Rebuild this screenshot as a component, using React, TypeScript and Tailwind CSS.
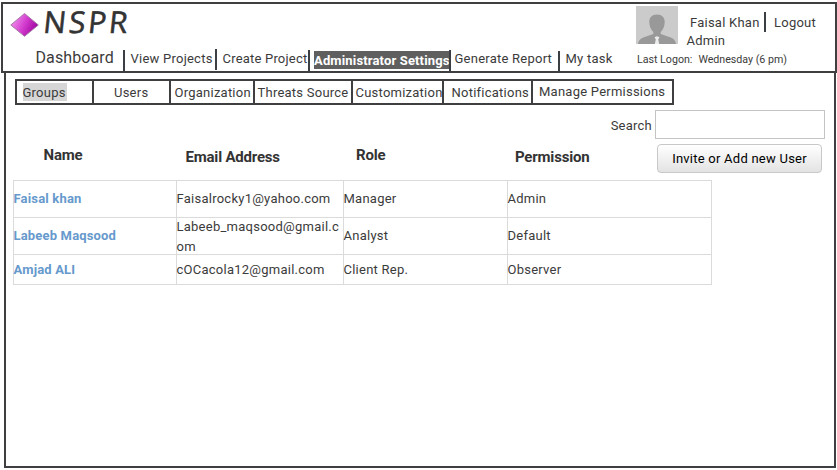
import React from 'react';

const tabs = [
  { label: 'Groups', cell: 'w-[77px] border-r-2 pl-[6px]', text: 'bg-[#d6d6d6] pr-px -indent-[0.5px]' },
  { label: 'Users', cell: 'w-[77px] border-r-2 pl-[20px]', text: '' },
  { label: 'Organization', cell: 'w-[84px] border-r-2 pl-[3.5px]', text: '' },
  { label: 'Threats Source', cell: 'w-[98px] border-r-2 pl-[2.5px]', text: '' },
  { label: 'Customization', cell: 'w-[91px] border-r-2 pl-[2.5px]', text: '' },
  { label: 'Notifications', cell: 'w-[89px] border-r-2 pl-[7.5px]', text: '' },
  { label: 'Manage Permissions', cell: 'w-[139px] pl-[6px]', text: '-mt-px' },
];

const rows = [
  { name: 'Faisal khan', email: ['Faisalrocky1@yahoo.com'], role: 'Manager', permission: 'Admin', height: 'h-[37px]', pad: 'pb-[2px]', emailPad: 'pb-[2px] leading-[19px]' },
  { name: 'Labeeb Maqsood', email: ['Labeeb_maqsood@gmail.c', 'om'], role: 'Analyst', permission: 'Default', height: 'h-[37px]', pad: 'pb-[2px]', emailPad: 'pt-[2px] leading-[20px]' },
  { name: 'Amjad ALI', email: ['cOCacola12@gmail.com'], role: 'Client Rep.', permission: 'Observer', height: 'h-[30px]', pad: '', emailPad: 'leading-[19px]' },
];

function Bar({ className = 'h-[21px]' }: { className?: string }) {
  return <div className={`w-[2px] shrink-0 bg-[#3b3f44] ${className}`} />;
}

function Logo() {
  return (
    <div className="flex h-[32px] pl-[7px] pt-[7px]">
      <svg width="30" height="26" viewBox="0 0 30 26" className="mt-[1px] shrink-0">
        <defs>
          <linearGradient id="gem" x1="0" y1="0.3" x2="1" y2="0.7">
            <stop offset="0.1" stopColor="#ec82e8" />
            <stop offset="0.5" stopColor="#d23bcd" />
            <stop offset="0.9" stopColor="#a30aa4" />
          </linearGradient>
        </defs>
        <path d="M14.5 1.5 28.3 13 14.5 24.3.8 13Z" fill="url(#gem)" stroke="#a57aa5" strokeWidth="1" />
      </svg>
      <span className="ml-[2px] mt-[-5px] h-[32px] origin-bottom-left -skew-x-6 font-['Open_Sans'] text-[30px] leading-[32px] tracking-[2.8px] text-[#333] [-webkit-text-stroke:0.6px_#333]">
        NSPR
      </span>
    </div>
  );
}

function Avatar() {
  return (
    <svg width="42" height="38" viewBox="0 0 42 38" className="shrink-0">
      <rect width="42" height="38" fill="#cbcbcb" />
      <path d="M21 8.500c5 0 8 3 7.700 8-.2 4-1.500 7-4 9.500v2l10 3.500c3 1 5 3.500 5.300 6.500H2c.3-3 2.300-5.500 5.300-6.500l10-3.500v-2c-2.500-2.500-3.800-5.500-4-9.500-.3-5 2.700-8 7.700-8Z" fill="#999" />
      <path d="m18.500 31.200 2.500-1 2.500 1-1.300 2.300 1 4.500h-4.400l1-4.500Z" fill="#ececec" />
    </svg>
  );
}

function Header() {
  return (
    <header className="flex h-[71px] w-[836px] justify-between border-2 border-[#3f3f41]">
      <div className="w-[626px]">
        <Logo />
        <nav className="flex h-[35px] pt-[14px]">
          <span className="-mt-px w-[120px] shrink-0 pl-[32.5px] text-[16px] leading-[18px] tracking-[0.1px]">Dashboard</span>
          <div className="flex w-[92px] shrink-0">
            <Bar />
            <span className="ml-[5.5px] mt-[1px] leading-4">View Projects</span>
          </div>
          <div className="flex w-[93px] shrink-0">
            <Bar className="-mt-px h-[21px]" />
            <span className="ml-[5.5px] mt-[1px] leading-4 tracking-[0.2px]">Create Project</span>
          </div>
          <div className="flex w-[141px] shrink-0">
            <Bar />
            <span className="ml-[4px] mt-[1px] h-[18px] w-[135px] bg-[#5f5f5f] font-bold leading-[19px] tracking-[0.15px] text-white">Administrator Settings</span>
          </div>
          <div className="flex w-[109px] shrink-0">
            <Bar />
            <span className="ml-[3.5px] mt-[1px] leading-4">Generate Report</span>
          </div>
          <Bar className="mt-px h-[20px]" />
          <span className="ml-[5.5px] mt-[1px] leading-4">My task</span>
        </nav>
      </div>
      <div className="w-[200px] pl-[1px] pt-[2px]">
        <div className="flex h-[38px]">
          <Avatar />
          <div className="ml-[8.5px]">
            <div className="flex h-[27px] pt-[6px]">
              <span className="ml-[3.5px] w-[74px] pt-[3px] leading-4">Faisal Khan</span>
              <Bar className="h-[20px]" />
              <span className="ml-[8px] pt-[3px] leading-4">Logout</span>
            </div>
            <div className="leading-4">Admin</div>
          </div>
        </div>
        <div className="ml-[1px] mt-[9px] flex gap-[6px] text-[10.67px] leading-[14px] tracking-[-0.01px]">
          <span>Last Logon:</span>
          <span>Wednesday (6 pm)</span>
        </div>
      </div>
    </header>
  );
}

function UserTable() {
  const cell = 'flex shrink-0 flex-col justify-center border-r border-[#dbdbdb] -indent-[0.5px]';
  return (
    <div className="w-[699px] tracking-[0.25px]">
      <div className="flex h-[34px] text-[15px] font-bold leading-[18px] tracking-[-0.2px] text-[#333]">
        <span className="w-[142px] pl-[30.5px]">Name</span>
        <span className="w-[171px] pl-[30.5px] pt-[2px]">Email Address</span>
        <span className="w-[159px] pl-[30px]">Role</span>
        <span className="pl-[30px] pt-[2px]">Permission</span>
      </div>
      <div className="border-l border-t border-[#dbdbdb]">
        {rows.map((row) => (
          <div key={row.name} className={`flex border-b border-[#dbdbdb] ${row.height}`}>
            <div className={`${cell} ${row.pad} w-[163px] font-bold leading-[19px] tracking-[0.17px] text-[#6699cc]`}>{row.name}</div>
            <div className={`${cell} ${row.emailPad} w-[167px]`}>
              {row.email.map((line) => (
                <div key={line}>{line}</div>
              ))}
            </div>
            <div className={`${cell} ${row.pad} w-[164px] leading-[19px]`}>{row.role}</div>
            <div className={`${cell} ${row.pad} w-[204px] leading-[19px]`}>{row.permission}</div>
          </div>
        ))}
      </div>
    </div>
  );
}

export default function App() {
  return (
    <div className="h-[470px] w-[837px] overflow-hidden whitespace-nowrap bg-white pl-px pt-[2px] font-['Roboto',sans-serif] text-[13px] tracking-[0.24px] text-[#3b3b3b]">
      <Header />
      <main className="ml-[3px] h-[395px] w-[832px] border-x-2 border-b-2 border-[#3f3f41]">
        <div className="ml-[9px] flex pt-[6px]">
          <div className="flex h-[26px] w-[659px] border-2 border-[#3f3f41]">
            {tabs.map((tab) => (
              <div key={tab.label} className={`flex shrink-0 items-start border-[#3f3f41] pt-[2px] ${tab.cell}`}>
                <span className={`h-[18px] leading-[20px] ${tab.text}`}>{tab.label}</span>
              </div>
            ))}
          </div>
        </div>
        <div className="mt-[5px] flex h-[29px] justify-end pr-[9px]">
          <label className="mr-[3px] pt-[8px] leading-4">Search</label>
          <input type="text" className="h-[29px] w-[170px] border border-[#c4c4c4] bg-white px-1 outline-none" />
        </div>
        <div className="flex justify-between pl-[7px] pr-[12px]">
          <div className="pt-[7px]"><UserTable /></div>
          <button className="-ml-[60px] mt-[5px] h-[29px] w-[165px] shrink-0 rounded-[4px] border border-[#c8c8c8] bg-linear-to-b from-white to-[#e3e3e3] text-black">
            Invite or Add new User
          </button>
        </div>
      </main>
    </div>
  );
}
